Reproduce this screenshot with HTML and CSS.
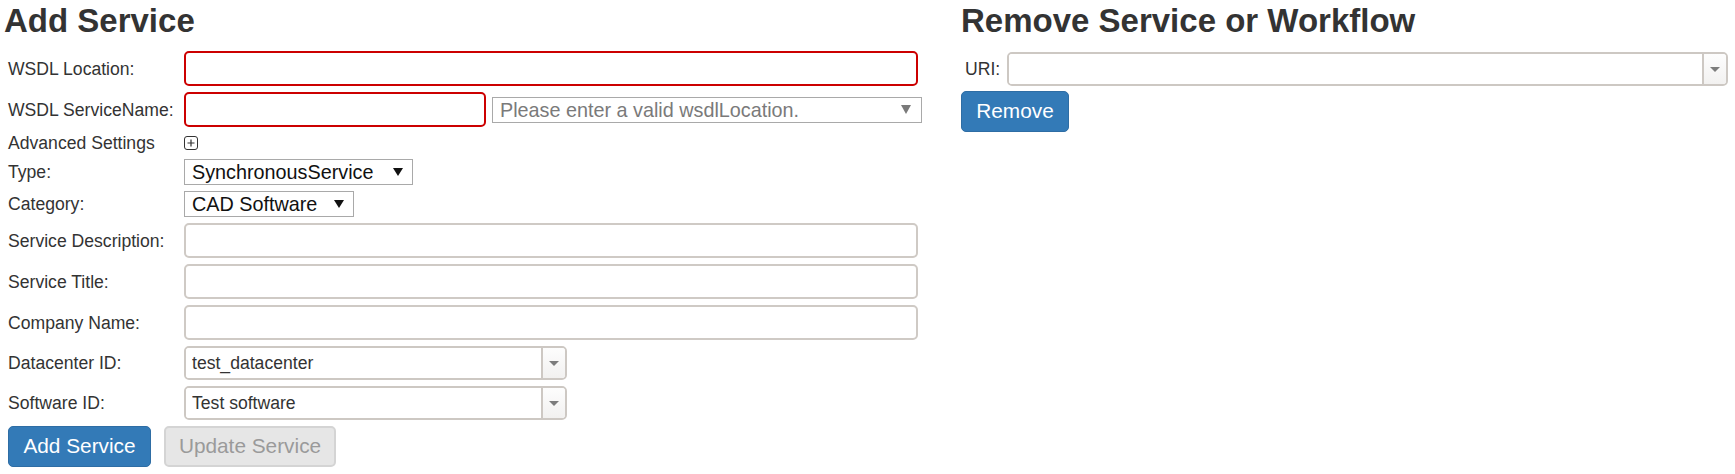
FILE: index.html
```html
<!DOCTYPE html>
<html lang="en">
<head>
<meta charset="utf-8">
<title>Service Management</title>
<link rel="stylesheet" href="styles.css">
</head>
<body>
<div class="page">
  <section class="col col-add">
    <h2 class="title">Add Service</h2>
    <div class="form">
      <label class="lbl">WSDL Location:</label>
      <div class="field"><input class="text invalid w-full" type="text"></div>

      <label class="lbl">WSDL ServiceName:</label>
      <div class="field field-pair">
        <input class="text invalid w-name" type="text">
        <div class="select select-hint">
          <span class="select-value">Please enter a valid wsdlLocation.</span>
          <svg class="caret" width="10" height="9" viewBox="0 0 10 9"><path d="M0 0H10L5 9Z" fill="#7a7a7a"/></svg>
        </div>
      </div>

      <label class="lbl lbl-adv">Advanced Settings</label>
      <div class="field field-adv">
        <svg class="plus" width="14" height="14" viewBox="0 0 14 14"><rect x="0.5" y="0.5" width="13" height="13" rx="2.5" fill="none" stroke="#333" stroke-width="1"/><path d="M3.5 7H10.5M7 3.5V10.5" stroke="#333" stroke-width="1.2"/></svg>
      </div>

      <label class="lbl">Type:</label>
      <div class="field">
        <div class="select select-plain w-type">
          <span class="select-value">SynchronousService</span>
          <svg class="caret" width="10" height="8" viewBox="0 0 10 8"><path d="M0 0H10L5 8Z" fill="#111"/></svg>
        </div>
      </div>

      <label class="lbl">Category:</label>
      <div class="field">
        <div class="select select-plain w-cat">
          <span class="select-value">CAD Software</span>
          <svg class="caret" width="10" height="8" viewBox="0 0 10 8"><path d="M0 0H10L5 8Z" fill="#111"/></svg>
        </div>
      </div>

      <label class="lbl">Service Description:</label>
      <div class="field"><input class="text w-full" type="text"></div>

      <label class="lbl">Service Title:</label>
      <div class="field"><input class="text w-full" type="text"></div>

      <label class="lbl">Company Name:</label>
      <div class="field"><input class="text w-full" type="text"></div>

      <label class="lbl">Datacenter ID:</label>
      <div class="field">
        <div class="combo w-combo">
          <input class="combo-input" type="text" value="test_datacenter">
          <span class="combo-btn"><svg width="10" height="5" viewBox="0 0 10 5"><path d="M0 0H10L5 5Z" fill="#7c7c7c"/></svg></span>
        </div>
      </div>

      <label class="lbl">Software ID:</label>
      <div class="field">
        <div class="combo w-combo">
          <input class="combo-input" type="text" value="Test software">
          <span class="combo-btn"><svg width="10" height="5" viewBox="0 0 10 5"><path d="M0 0H10L5 5Z" fill="#7c7c7c"/></svg></span>
        </div>
      </div>
    </div>
    <div class="actions">
      <button class="btn btn-primary btn-add" type="button">Add Service</button>
      <button class="btn btn-disabled btn-update" type="button" disabled>Update Service</button>
    </div>
  </section>

  <section class="col col-remove">
    <h2 class="title">Remove Service or Workflow</h2>
    <div class="uri-row">
      <label class="lbl lbl-uri">URI:</label>
      <div class="combo w-uri">
        <input class="combo-input" type="text">
        <span class="combo-btn"><svg width="10" height="5" viewBox="0 0 10 5"><path d="M0 0H10L5 5Z" fill="#7c7c7c"/></svg></span>
      </div>
    </div>
    <button class="btn btn-primary btn-remove" type="button">Remove</button>
  </section>
</div>
</body>
</html>
```

FILE: styles.css
```css
* { box-sizing: border-box; }

html, body {
  margin: 0;
  padding: 0;
  background: #fff;
}

body {
  font-family: "Liberation Sans", Arial, sans-serif;
  color: #333;
  font-size: 17.6px;
}

.page {
  display: flex;
  align-items: flex-start;
  padding-left: 4px;
}

.col-add {
  width: 918px;
  flex: none;
}

.col-remove {
  margin-left: 39px;
  width: 770px;
  flex: none;
}

.title {
  margin: 3px 0 0 0;
  font-size: 33px;
  line-height: 36px;
  font-weight: bold;
  color: #333;
}

.form {
  margin-top: 12px;
  padding-left: 4px;
  display: grid;
  grid-template-columns: 176px 738px;
  row-gap: 6px;
  align-items: center;
}

.lbl {
  font-size: 17.6px;
  line-height: 20px;
  color: #333;
  white-space: nowrap;
}

.lbl-adv { height: 20px; display: flex; align-items: center; }

.field {
  display: flex;
  align-items: center;
}

.field-pair { gap: 6px; }

.field-adv { height: 20px; }
.plus { display: block; }

.text {
  height: 35px;
  border: 2px solid #cfcac5;
  border-radius: 5px;
  background: #fff;
  font: inherit;
  padding: 0 8px;
  outline: none;
}

.text.invalid { border-color: #cc0000; }

.w-full { width: 734px; }
.w-name { width: 302px; }

.select {
  display: flex;
  align-items: center;
  justify-content: space-between;
  height: 26px;
  border: 1px solid #a9a9a9;
  background: #fff;
  font-size: 19.8px;
  padding: 0 9px 0 7px;
}

.select-value { line-height: 24px; white-space: nowrap; }

.select-hint {
  width: 430px;
  color: #7a7a7a;
  padding-left: 7px;
  padding-right: 10px;
}

.select-plain { color: #111; }
.w-type { width: 229px; }
.w-cat { width: 170px; }

.caret { display: block; flex: none; }

.combo {
  display: flex;
  height: 34px;
  border: 2px solid #cdc8c3;
  border-radius: 5px;
  overflow: hidden;
  background: #fff;
}

.combo-input {
  flex: 1;
  min-width: 0;
  border: none;
  outline: none;
  font: inherit;
  font-size: 17.6px;
  color: #333;
  padding: 0 6px;
  background: #fff;
}

.combo-btn {
  width: 24px;
  flex: none;
  border-left: 2px solid #cdc8c3;
  background: linear-gradient(#fdfdfd, #f2f1f0);
  display: flex;
  align-items: center;
  justify-content: center;
}

.w-combo { width: 383px; }
.w-uri { width: 721px; }

.actions {
  display: flex;
  gap: 13px;
  margin-top: 6px;
  padding-left: 4px;
}

.btn {
  height: 41px;
  font-family: "Liberation Sans", Arial, sans-serif;
  font-size: 20.8px;
  border-radius: 5px;
  padding: 0;
  line-height: 1;
  white-space: nowrap;
  text-align: center;
}

.btn-primary {
  background: #337ab7;
  border: 1px solid #2e6da4;
  color: #fff;
}

.btn-add { width: 143px; }

.btn-disabled {
  background: #e6e6e6;
  border: 2px solid #d4d4d4;
  color: #9a9a9a;
  width: 172px;
}

.uri-row {
  display: flex;
  align-items: center;
  margin-top: 13px;
}

.lbl-uri {
  width: 46px;
  padding-left: 4px;
}

.btn-remove {
  margin-top: 5px;
  width: 108px;
  display: block;
}
```
